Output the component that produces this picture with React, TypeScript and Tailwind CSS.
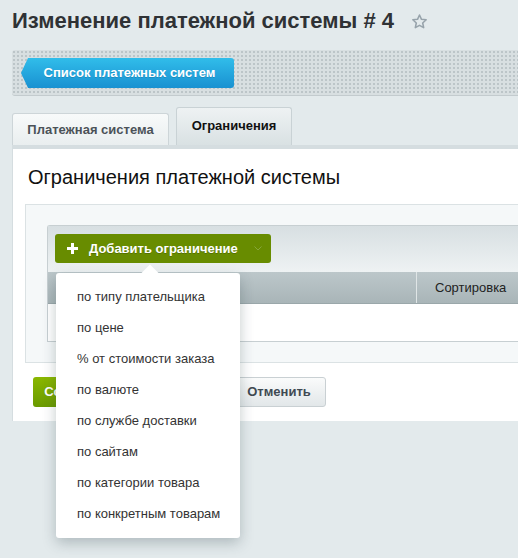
import { useState } from "react"

const items = [
  "по типу плательщика",
  "по цене",
  "% от стоимости заказа",
  "по валюте",
  "по службе доставки",
  "по сайтам",
  "по категории товара",
  "по конкретным товарам",
]

const Star = () => (
  <svg width="17" height="17" viewBox="0 0 24 24" fill="none" stroke="#97a3ab" strokeWidth="2.2" strokeLinejoin="round">
    <path d="M12 2.8l2.8 6.1 6.6.7-4.9 4.5 1.4 6.6L12 17.4l-5.9 3.3 1.4-6.6-4.9-4.5 6.6-.7z" />
  </svg>
)

const App = () => {
  const [open] = useState(true)

  return (
    <div className="min-h-[558px] w-full overflow-hidden bg-[#e3eaec] font-['Liberation_Sans',Arial,sans-serif]">
      {/* title */}
      <div className="flex items-center gap-[17px] px-3 pt-[7px]">
        <h1 className="text-[22px] font-bold leading-[28px] text-[#2f3235]">Изменение платежной системы # 4</h1>
        <Star />
      </div>

      {/* toolbar */}
      <div className="ml-3 mt-[15px] h-[46px] rounded-l-[3px] border-b border-[#c3cbce] bg-[#d8dfe1] bg-[radial-gradient(#bcc5c8_0.8px,transparent_0.9px)] bg-[length:4px_4px] pl-[9px] pt-2">
        <button className="h-[30px] w-[213px] rounded-r-[3px] bg-gradient-to-b from-[#31bdea] to-[#1991d1] pl-[4px] text-[13px] font-bold text-white [clip-path:polygon(7px_0,100%_0,100%_100%,7px_100%,0_50%)] [text-shadow:0_1px_0_rgba(0,0,0,0.15)]">
          Список платежных систем
        </button>
      </div>

      {/* tabs */}
      <div className="ml-3 mt-[11px] flex items-end gap-[7px]">
        <div className="flex h-[32px] w-[157px] items-center justify-center rounded-t-[3px] border border-b-0 border-[#cdd5d8] bg-gradient-to-b from-[#f8fafa] to-[#e9eeef] text-[13px] font-bold text-[#4b5258]">
          Платежная система
        </div>
        <div className="flex h-[38px] w-[116px] items-center justify-center rounded-t-[3px] border border-b-0 border-[#c9d2d5] bg-gradient-to-b from-[#eef2f3] to-[#d9e1e3] pb-[2px] text-[13px] font-bold text-[#111]">
          Ограничения
        </div>
      </div>

      {/* panel */}
      <div className="ml-3 h-[276px] border-l border-t-4 border-[#d5dde0] bg-white">
        <h2 className="pl-[15px] pt-[16px] text-[20px] leading-[24px] text-[#111]">Ограничения платежной системы</h2>

        <div className="relative ml-3 mt-[15px] border border-r-0 border-[#dbe2e4] bg-[#f5f8f9] pb-[20px] pl-[21px] pt-[20px]">
          <div className="rounded-tl-[3px] border-b border-l border-t border-[#c7cfd2]">
            <div className="h-[46px] bg-gradient-to-b from-[#d7dfe2] to-[#eef2f3] pl-[7px] pt-2">
              <button className="flex h-[29px] w-[216px] items-center rounded-[3px] bg-[#688c00] pl-3 text-[13px] font-bold text-white [text-shadow:0_1px_0_rgba(0,0,0,0.2)]">
                <svg width="11" height="11" viewBox="0 0 11 11" className="mr-[11px]">
                  <rect x="4" y="0" width="3" height="11" fill="white" />
                  <rect x="0" y="4" width="11" height="3" fill="white" />
                </svg>
                Добавить ограничение
                <svg width="8" height="5" viewBox="0 0 8 5" className="ml-[16px]">
                  <path d="M0.5 0.5 L4 4 L7.5 0.5" fill="none" stroke="#86a63a" strokeWidth="1" />
                </svg>
              </button>
            </div>
            <div className="flex h-[32px] border-b border-[#9aa7aa] bg-gradient-to-b from-[#bcc7ca] to-[#a9b5b8] text-[13px] text-[#222]">
              <div className="w-[369px] border-r border-[#dfe5e6]" />
              <div className="flex items-center pl-[18px]">Сортировка</div>
            </div>
            <div className="h-[37px] bg-white" />
          </div>

          {open && (
            <div className="absolute left-[30px] top-[68px] w-[184px] rounded-[3px] bg-white pb-[9px] pt-2 shadow-[0_5px_14px_rgba(40,60,70,0.28)]">
              <div className="absolute -top-[6px] left-[88px] h-3 w-3 rotate-45 bg-white" />
              {items.map((item) => (
                <div key={item} className="relative flex h-[31px] items-center pl-[21px] text-[13px] text-[#333]">
                  {item}
                </div>
              ))}
            </div>
          )}
        </div>

        <div className="flex gap-[6px] pl-5 pt-[14px]">
          <button className="h-[30px] w-[92px] rounded-[3px] bg-gradient-to-b from-[#8ab700] to-[#6a9a00] text-[13px] font-bold text-white">Сохранить</button>
          <button className="h-[30px] w-[95px] rounded-[3px] border border-[#c9d0d3] bg-gradient-to-b from-[#fafbfb] to-[#e2e7e9] text-[13px] font-bold text-[#3f4a52]">Применить</button>
          <button className="h-[30px] w-[94px] rounded-[3px] border border-[#c9d0d3] bg-gradient-to-b from-[#fafbfb] to-[#e2e7e9] text-[13px] font-bold text-[#3f4a52]">Отменить</button>
        </div>
      </div>
    </div>
  )
}

export default App
